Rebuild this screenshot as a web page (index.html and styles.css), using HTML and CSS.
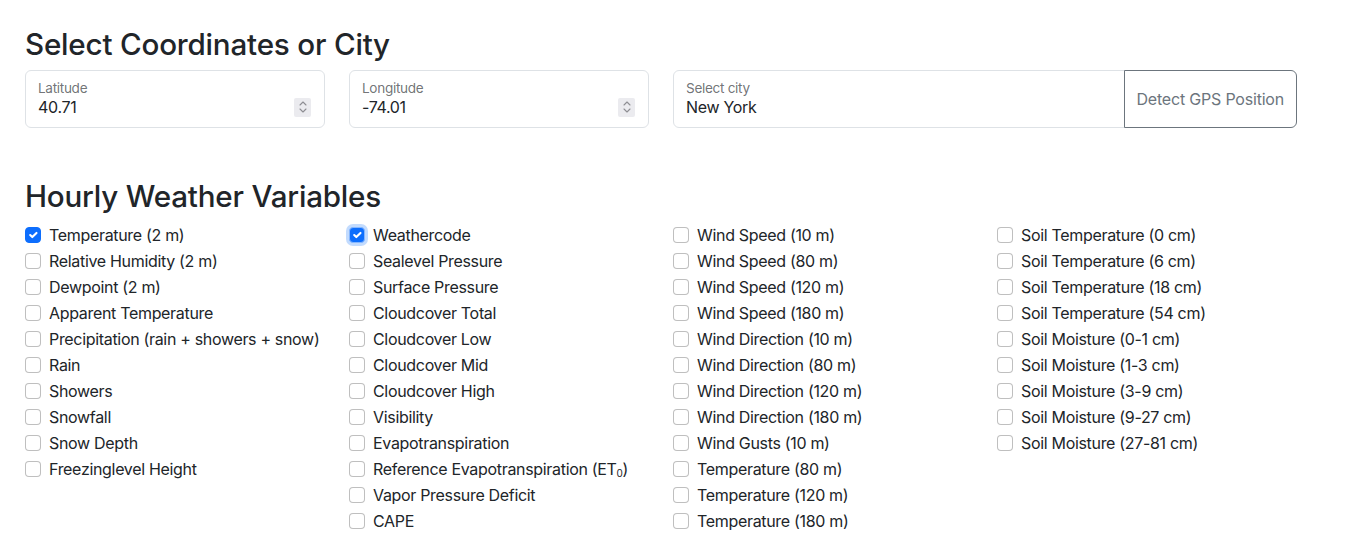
FILE: index.html
```html
<!DOCTYPE html>
<html lang="en">
<head>
<meta charset="utf-8">
<title>Weather API</title>
<link rel="stylesheet" href="styles.css">
</head>
<body>
<div class="container">
  <h2 class="heading">Select Coordinates or City</h2>
  <div class="coords">
    <div class="floating">
      <label class="flabel">Latitude</label>
      <div class="fvalue"><span>40.71</span><span class="spinner"><svg width="10" height="14" viewBox="0 0 10 14"><path d="M2 5 5 2 8 5M2 9 5 12 8 9" fill="none" stroke="#8e8e93" stroke-width="1.1" stroke-linecap="round" stroke-linejoin="round"/></svg></span></div>
    </div>
    <div class="floating">
      <label class="flabel">Longitude</label>
      <div class="fvalue"><span>-74.01</span><span class="spinner"><svg width="10" height="14" viewBox="0 0 10 14"><path d="M2 5 5 2 8 5M2 9 5 12 8 9" fill="none" stroke="#8e8e93" stroke-width="1.1" stroke-linecap="round" stroke-linejoin="round"/></svg></span></div>
    </div>
    <div class="group">
      <div class="floating city">
        <label class="flabel">Select city</label>
        <div class="fvalue"><span>New York</span></div>
      </div>
      <button class="gps" type="button">Detect GPS Position</button>
    </div>
  </div>

  <h2 class="heading second">Hourly Weather Variables</h2>
  <div class="checks">
    <div class="col">
      <div class="check"><span class="box checked"></span><span>Temperature (2 m)</span></div>
      <div class="check"><span class="box"></span><span>Relative Humidity (2 m)</span></div>
      <div class="check"><span class="box"></span><span>Dewpoint (2 m)</span></div>
      <div class="check"><span class="box"></span><span>Apparent Temperature</span></div>
      <div class="check"><span class="box"></span><span>Precipitation (rain + showers + snow)</span></div>
      <div class="check"><span class="box"></span><span>Rain</span></div>
      <div class="check"><span class="box"></span><span>Showers</span></div>
      <div class="check"><span class="box"></span><span>Snowfall</span></div>
      <div class="check"><span class="box"></span><span>Snow Depth</span></div>
      <div class="check"><span class="box"></span><span>Freezinglevel Height</span></div>
    </div>
    <div class="col">
      <div class="check"><span class="box checked focused"></span><span>Weathercode</span></div>
      <div class="check"><span class="box"></span><span>Sealevel Pressure</span></div>
      <div class="check"><span class="box"></span><span>Surface Pressure</span></div>
      <div class="check"><span class="box"></span><span>Cloudcover Total</span></div>
      <div class="check"><span class="box"></span><span>Cloudcover Low</span></div>
      <div class="check"><span class="box"></span><span>Cloudcover Mid</span></div>
      <div class="check"><span class="box"></span><span>Cloudcover High</span></div>
      <div class="check"><span class="box"></span><span>Visibility</span></div>
      <div class="check"><span class="box"></span><span>Evapotranspiration</span></div>
      <div class="check"><span class="box"></span><span>Reference Evapotranspiration (ET<sub class="sub">0</sub>)</span></div>
      <div class="check"><span class="box"></span><span>Vapor Pressure Deficit</span></div>
      <div class="check"><span class="box"></span><span>CAPE</span></div>
    </div>
    <div class="col">
      <div class="check"><span class="box"></span><span>Wind Speed (10 m)</span></div>
      <div class="check"><span class="box"></span><span>Wind Speed (80 m)</span></div>
      <div class="check"><span class="box"></span><span>Wind Speed (120 m)</span></div>
      <div class="check"><span class="box"></span><span>Wind Speed (180 m)</span></div>
      <div class="check"><span class="box"></span><span>Wind Direction (10 m)</span></div>
      <div class="check"><span class="box"></span><span>Wind Direction (80 m)</span></div>
      <div class="check"><span class="box"></span><span>Wind Direction (120 m)</span></div>
      <div class="check"><span class="box"></span><span>Wind Direction (180 m)</span></div>
      <div class="check"><span class="box"></span><span>Wind Gusts (10 m)</span></div>
      <div class="check"><span class="box"></span><span>Temperature (80 m)</span></div>
      <div class="check"><span class="box"></span><span>Temperature (120 m)</span></div>
      <div class="check"><span class="box"></span><span>Temperature (180 m)</span></div>
    </div>
    <div class="col">
      <div class="check"><span class="box"></span><span>Soil Temperature (0 cm)</span></div>
      <div class="check"><span class="box"></span><span>Soil Temperature (6 cm)</span></div>
      <div class="check"><span class="box"></span><span>Soil Temperature (18 cm)</span></div>
      <div class="check"><span class="box"></span><span>Soil Temperature (54 cm)</span></div>
      <div class="check"><span class="box"></span><span>Soil Moisture (0-1 cm)</span></div>
      <div class="check"><span class="box"></span><span>Soil Moisture (1-3 cm)</span></div>
      <div class="check"><span class="box"></span><span>Soil Moisture (3-9 cm)</span></div>
      <div class="check"><span class="box"></span><span>Soil Moisture (9-27 cm)</span></div>
      <div class="check"><span class="box"></span><span>Soil Moisture (27-81 cm)</span></div>
    </div>
  </div>
</div>
</body>
</html>
```
FILE: styles.css
```css
* { box-sizing: border-box; }
html, body { margin: 0; padding: 0; background: #fff; }
body {
  font-family: Inter, "Liberation Sans", sans-serif;
  font-size: 16px;
  line-height: 1.5;
  letter-spacing: -0.32px;
  color: #212529;
}
.container {
  padding: 26px 25px 0 25px;
}
.heading {
  margin: 0 0 8px 0;
  font-size: 29.6px;
  font-weight: 500;
  line-height: 36px;
  letter-spacing: -0.2px;
  color: #212529;
}
.heading.second { margin-top: 50px; margin-bottom: 9px; }
.coords {
  display: grid;
  grid-template-columns: 300px 300px 624px;
  column-gap: 24px;
}
.floating {
  height: 58px;
  border: 1px solid #dee2e6;
  border-radius: 6px;
  padding: 7px 12px 0 12px;
  display: flex;
  flex-direction: column;
  background: #fff;
}
.flabel {
  font-size: 13.6px;
  line-height: 20px;
  color: rgba(33, 37, 41, 0.65);
  margin-bottom: -3px;
}
.fvalue {
  display: flex;
  align-items: center;
  justify-content: space-between;
  line-height: 24px;
}
.spinner {
  width: 17px;
  height: 19px;
  background: #ebebef;
  border-radius: 2px;
  display: flex;
  align-items: center;
  justify-content: center;
  margin-right: 1px;
}
.group { display: flex; }
.floating.city {
  flex: 1;
  border-top-right-radius: 0;
  border-bottom-right-radius: 0;
}
.gps {
  font-family: inherit;
  font-size: 16px;
  line-height: 24px;
  letter-spacing: -0.2px;
  color: #6c757d;
  background: #fff;
  border: 1px solid #6c757d;
  border-radius: 0 6px 6px 0;
  padding: 6px 12px;
  margin-left: -1px;
  white-space: nowrap;
}
.checks {
  display: grid;
  grid-template-columns: repeat(4, 300px);
  column-gap: 24px;
}
.check {
  display: flex;
  align-items: flex-start;
  min-height: 24px;
  margin-bottom: 2px;
  white-space: nowrap;
}
.box {
  flex: none;
  width: 16px;
  height: 16px;
  margin-top: 4px;
  margin-right: 8px;
  border: 1px solid rgba(0, 0, 0, 0.25);
  border-radius: 4px;
  background: #fff;
}
.box.checked {
  background: #0d6efd url("data:image/svg+xml,%3csvg xmlns='http://www.w3.org/2000/svg' viewBox='0 0 20 20'%3e%3cpath fill='none' stroke='%23fff' stroke-linecap='round' stroke-linejoin='round' stroke-width='3' d='m6 10 3 3 6-6'/%3e%3c/svg%3e") center / 100% 100% no-repeat;
  border-color: #0d6efd;
}
.box.focused {
  box-shadow: 0 0 0 3px rgba(13, 110, 253, 0.25);
  border-color: #86b7fe;
}
.sub {
  font-size: 10px;
  line-height: 0;
  vertical-align: -2px;
}
```
